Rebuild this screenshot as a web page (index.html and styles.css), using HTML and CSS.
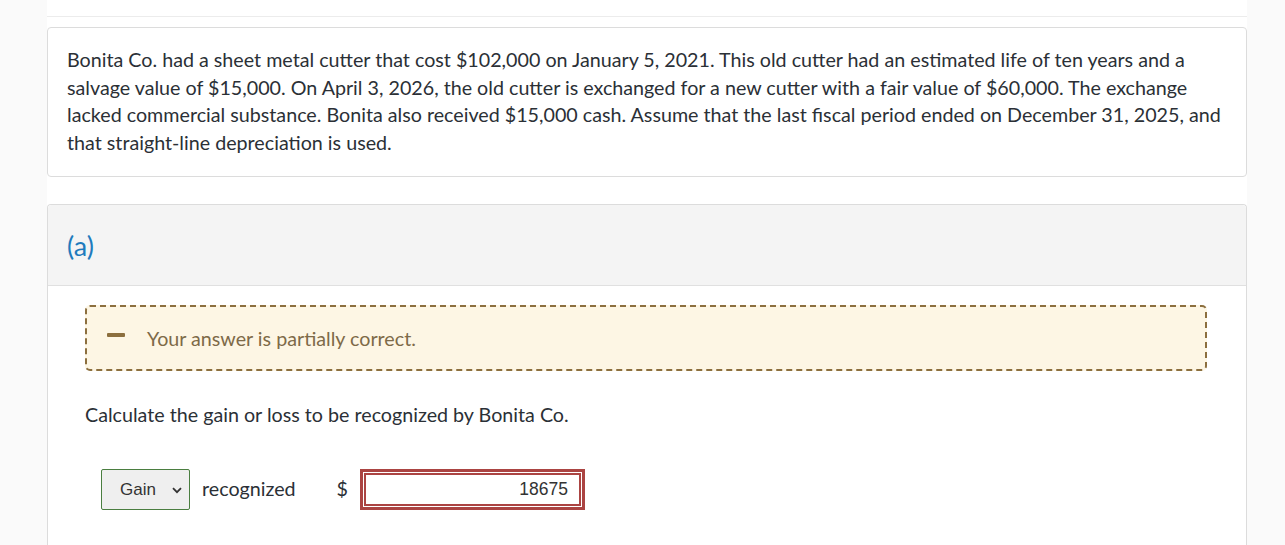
FILE: index.html
```
<!DOCTYPE html>
<html>
<head>
<meta charset="utf-8">
<link rel="stylesheet" href="styles.css">
</head>
<body>
<div class="page">
  <div class="rule"></div>
  <div class="card intro">
    <p>Bonita Co. had a sheet metal cutter that cost $102,000 on January 5, 2021. This old cutter had an estimated life of ten years and a salvage value of $15,000. On April 3, 2026, the old cutter is exchanged for a new cutter with a fair value of $60,000. The exchange lacked commercial substance. Bonita also received $15,000 cash. Assume that the last fiscal period ended on December 31, 2025, and that straight-line depreciation is used.</p>
  </div>
  <div class="card part">
    <div class="part-head">(a)</div>
    <div class="part-body">
      <div class="feedback">
        <span class="dash"></span>
        <span class="fb-text">Your answer is partially correct.</span>
      </div>
      <p class="question">Calculate the gain or loss to be recognized by Bonita Co.</p>
      <div class="answer-row">
        <div class="select">
          <span>Gain</span>
          <svg class="chev" width="10" height="7" viewBox="0 0 10 7"><path d="M1 1.2 L5 5.2 L9 1.2" fill="none" stroke="#333" stroke-width="1.8"/></svg>
        </div>
        <span class="label">recognized</span>
        <span class="dollar">$</span>
        <div class="input"><span>18675</span></div>
      </div>
    </div>
  </div>
</div>
</body>
</html>
```
FILE: styles.css
```
html, body {
  margin: 0;
  padding: 0;
  background: #fafafa;
}
body {
  font-family: Lato, "Liberation Sans", sans-serif;
  color: #2b3036;
}
.page {
  margin-left: 47px;
  width: 1200px;
  height: 545px;
  overflow: hidden;
  background: #fff;
  padding-top: 16px;
  box-sizing: border-box;
}
.rule {
  border-top: 1px solid #ececec;
  margin-bottom: 10px;
}
.card {
  border: 1px solid #dcdcdc;
  border-radius: 4px;
  background: #fff;
}
.intro {
  padding: 18px 20px 20px 19px;
}
.intro p {
  margin: 0;
  font-size: 19.7px;
  line-height: 27.6px;
}
.part {
  margin-top: 27px;
  border-bottom: none;
  border-bottom-left-radius: 0;
  border-bottom-right-radius: 0;
}
.part-head {
  height: 80px;
  background: #f4f4f4;
  border-bottom: 1px solid #e0e0e0;
  display: flex;
  align-items: center;
  padding: 0 19px;
  font-size: 27px;
  color: #1f7bbd;
  border-top-left-radius: 4px;
  border-top-right-radius: 4px;
}
.part-body {
  padding: 19px 39px 80px 37px;
}
.feedback {
  height: 62px;
  border: 2px dashed #8c6f3e;
  border-radius: 5px;
  background: #fdf6e4;
  display: flex;
  align-items: center;
  padding-left: 20px;
}
.dash {
  width: 18px;
  height: 4px;
  background: #8c6f3e;
  border-radius: 1px;
  margin-top: -7px;
  margin-right: 22px;
}
.fb-text {
  font-size: 19.7px;
  color: #7d6a48;
}
.question {
  margin: 30px 0 0 0;
  font-size: 19.7px;
  line-height: 27px;
}
.answer-row {
  margin-top: 41px;
  margin-left: 16px;
  display: flex;
  align-items: center;
  height: 41px;
}
.select {
  width: 89px;
  height: 41px;
  box-sizing: border-box;
  border: 1px solid #4a7e40;
  border-radius: 2px;
  background: #efefef;
  display: flex;
  align-items: center;
  padding-left: 18px;
  font-family: "Liberation Sans", Arial, sans-serif;
  font-size: 17px;
  color: #333;
}
.chev {
  margin-left: 16px;
  margin-top: 1px;
}
.label {
  font-size: 19.7px;
  margin-left: 12px;
  margin-top: -3px;
}
.dollar {
  font-size: 19.7px;
  margin-left: 41px;
  margin-top: -2px;
}
.input {
  margin-left: 12px;
  width: 225px;
  height: 41px;
  box-sizing: border-box;
  border: 3px solid #ab4442;
  background: #fff;
  position: relative;
  display: flex;
  align-items: center;
  justify-content: flex-end;
  padding-right: 14px;
  font-family: "Liberation Sans", Arial, sans-serif;
  font-size: 17.5px;
  color: #333;
}
.input::after {
  content: "";
  position: absolute;
  inset: 1px;
  border: 2px solid #ab4442;
  pointer-events: none;
}
```
